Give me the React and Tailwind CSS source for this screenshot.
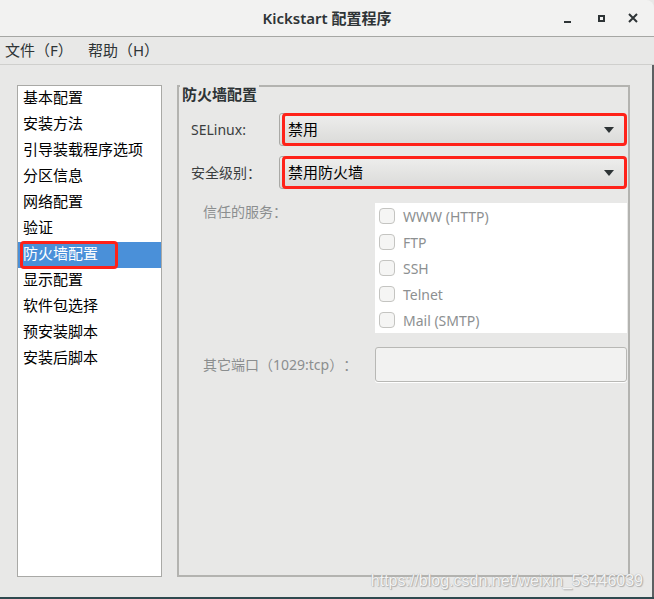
import React from "react";

const items = [
  "基本配置",
  "安装方法",
  "引导装载程序选项",
  "分区信息",
  "网络配置",
  "验证",
  "防火墙配置",
  "显示配置",
  "软件包选择",
  "预安装脚本",
  "安装后脚本",
];

const services = ["WWW (HTTP)", "FTP", "SSH", "Telnet", "Mail (SMTP)"];

const font = { fontFamily: '"Noto Sans", "Noto Sans CJK SC", sans-serif' };

function Combo({ text }) {
  return (
    <div className="relative w-[346px] h-[33px]">
      <div className="w-full h-full rounded-[3px] border border-[#a9a9a6] bg-gradient-to-b from-[#eeeeed] to-[#dadad8] flex items-center pl-[8px] pr-[10px] text-[15px] text-black">
        <span className="flex-1">{text}</span>
        <svg width="10" height="6" viewBox="0 0 10 6">
          <path d="M0 0 L10 0 L5 6 Z" fill="#2e3436" />
        </svg>
      </div>
      <div className="absolute left-[3px] -right-[2px] top-0 bottom-0 rounded-[4px] border-[3px] border-[#ff2219]" />
    </div>
  );
}

export default function App() {
  return (
    <div
      className="w-[654px] h-[599px] bg-[#e8e8e7] flex flex-col relative overflow-hidden"
      style={font}
    >
      {/* title bar */}
      <div className="h-[37px] shrink-0 bg-[#f2f2f1] border-b border-[#a6a7a4] rounded-tr-[8px] flex items-center relative">
        <div className="flex-1 text-center text-[15px] font-semibold text-[#2e3436]">
          Kickstart 配置程序
        </div>
        <div className="absolute right-[6px] top-0 h-full flex items-center text-[#2e3436]">
          <div className="w-[34px] flex justify-center">
            <div className="w-[7px] h-[2px] bg-[#2e3436] mt-[8px]" />
          </div>
          <div className="w-[34px] flex justify-center">
            <div className="w-[7px] h-[7px] border-2 border-[#2e3436]" />
          </div>
          <div className="w-[30px] flex justify-center">
            <svg width="10" height="10" viewBox="0 0 10 10">
              <path d="M1 1 L9 9 M9 1 L1 9" stroke="#2e3436" strokeWidth="2" />
            </svg>
          </div>
        </div>
      </div>

      {/* menu bar */}
      <div className="h-[28px] shrink-0 border-b border-[#cfcfcd] flex items-center text-[15px] text-[#2e3436] pl-[5px]">
        <span className="w-[83px]">文件（F）</span>
        <span>帮助（H）</span>
      </div>

      {/* main */}
      <div className="flex-1 flex pt-[20px] pb-[20px] pl-[17px] border-r-2 border-[#5c6062]">
        {/* list */}
        <div className="w-[145px] bg-white border border-[#a9a9a6] text-[15px] text-black relative">
          {items.map((it, i) => (
            <div
              key={it}
              className={
                "h-[26px] flex items-center pl-[5px] pb-[3px] " +
                (i === 6 ? "bg-[#4a90d9] text-white" : "")
              }
            >
              {it}
            </div>
          ))}
          <div className="absolute left-[2px] top-[155px] w-[98px] h-[28px] rounded-[4px] border-[3px] border-[#ff2219]" />
        </div>

        {/* frame */}
        <div className="ml-[15px] w-[453px] border-2 border-[#b3b3b0] flex flex-col">
          <div className="-mt-[2px] h-[18px] leading-[18px] self-start ml-[1px] px-[2px] bg-[#e8e8e7] text-[15px] font-bold text-[#2e3436]">
            防火墙配置
          </div>

          <div className="mt-[10px] flex items-center pl-[12px]">
            <div className="w-[88px] text-[14px] text-[#3a3d3e]">SELinux:</div>
            <Combo text="禁用" />
          </div>
          <div className="mt-[10px] flex items-center pl-[12px]">
            <div className="w-[88px] text-[14px] text-[#3a3d3e]">安全级别：</div>
            <Combo text="禁用防火墙" />
          </div>

          <div className="mt-[14px] flex pl-[24px]">
            <div className="w-[172px] text-[14px] leading-[18px] text-[#8b8e8f]">
              信任的服务：
            </div>
            <div className="w-[252px] h-[130px] bg-white flex flex-col">
              {services.map((s) => (
                <div key={s} className="h-[26px] flex items-center pl-[4px]">
                  <div className="w-[16px] h-[16px] rounded-[4px] border border-[#c4c4c1] bg-[#f5f5f4]" />
                  <span className="ml-[8px] text-[14px] text-[#8d9091]">{s}</span>
                </div>
              ))}
            </div>
          </div>

          <div className="mt-[14px] flex items-center pl-[24px]">
            <div className="w-[172px] text-[14px] text-[#8b8e8f] whitespace-nowrap [text-spacing-trim:space-all]">
              其它端口（1029:tcp）：
            </div>
            <div className="w-[252px] h-[35px] rounded-[3px] border border-[#b8b8b5] bg-[#f2f2f1] shadow-[0_1px_0_#ffffff]" />
          </div>
        </div>
      </div>

      {/* bottom desktop edge */}
      <div className="h-[2px] shrink-0 bg-[#2f4a4f]" />

      {/* watermark */}
      <div
        className="absolute right-[11px] bottom-[6px] text-[16px] text-[#f4f4f4]"
        style={{
          fontFamily: '"Liberation Sans", Arial, sans-serif',
          textShadow: "0 0 1px #9a9a9a, 1px 1px 1px #b0b0b0",
        }}
      >
        https://blog.csdn.net/weixin_53446039
      </div>
    </div>
  );
}
